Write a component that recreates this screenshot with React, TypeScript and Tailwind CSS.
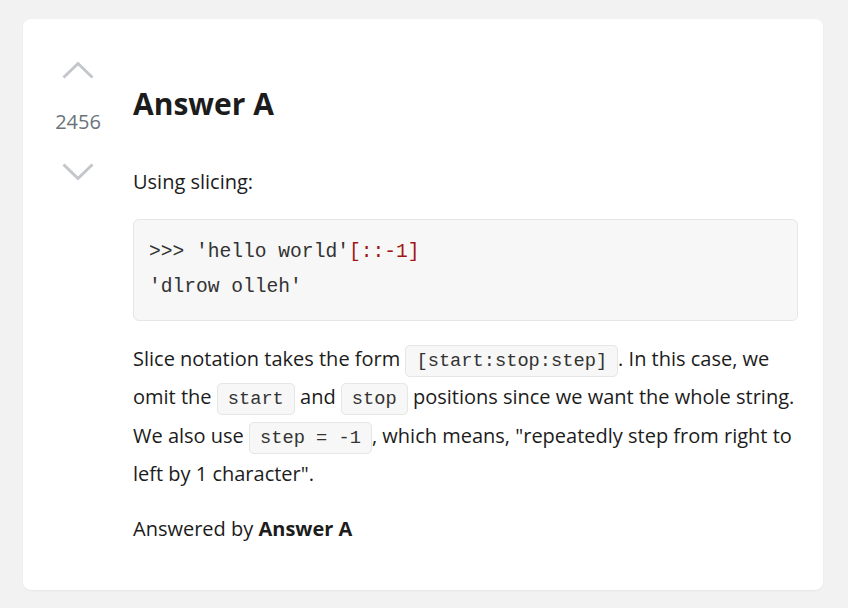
import React from 'react';

const sans = { fontFamily: '"Open Sans", "Noto Sans", sans-serif' };

function Chevron({ down }: { down?: boolean }) {
  return (
    <svg width="32" height="20" viewBox="0 0 32 20" fill="none" className="block">
      <path
        d={down ? 'M1.5 2.5 L16 16.5 L30.5 2.5' : 'M1.5 18.5 L16 4.5 L30.5 18.5'}
        stroke="#c3c7cb"
        strokeWidth="3"
      />
    </svg>
  );
}

function Code({ children }: { children: React.ReactNode }) {
  return (
    <code className="font-['Courier_New','Nimbus_Mono_PS','Liberation_Mono',monospace] text-[18.7px] leading-none text-[#333] bg-[#f6f7f6] border border-[#e5e7e5] rounded-[5px] px-[10px] py-[4px]">
      {children}
    </code>
  );
}

export default function App() {
  return (
    <div className="min-h-[608px] bg-[#f2f2f2] pl-[23px] pr-[25px] pt-[19px] pb-[19px]" style={sans}>
      <div className="bg-white rounded-[8px] shadow-[0_1px_2px_rgba(0,0,0,0.05)] flex pl-[33px] pr-[25px] pt-[40px] pb-[42px]">
        {/* votes */}
        <div className="w-[44px] flex flex-col items-center shrink-0">
          <Chevron />
          <div className="mt-[33px] text-[20px] text-[#6a737c] leading-[20px]">2456</div>
          <div className="mt-[30px]">
            <Chevron down />
          </div>
        </div>

        {/* body */}
        <div className="ml-[33px] flex-1 min-w-0 text-[#1c1c1c]">
          <h1 className="text-[30px] font-bold leading-[37.5px] mt-[26px]">Answer A</h1>
          <p className="text-[20px] leading-[38.3px] mt-[40.6px]">Using slicing:</p>
          <pre className="mt-[17.6px] bg-[#f6f7f6] border border-[#e5e7e5] rounded-[6px] px-[15px] py-[15px] font-['Courier_New','Nimbus_Mono_PS','Liberation_Mono',monospace] text-[19.6px] leading-[35px] text-[#333]">
            {'>>> '}&apos;hello world&apos;<span className="text-[#a31515]">[::-1]</span>
            {'\n'}&apos;dlrow olleh&apos;
          </pre>
          <p className="text-[20px] leading-[38.3px] mt-[19px]">
            Slice notation takes the form <Code>[start:stop:step]</Code>. In this case, we omit the{' '}
            <Code>start</Code> and <Code>stop</Code> positions since we want the whole string. We also use{' '}
            <Code>step = -1</Code>, which means, "repeatedly step from right to left by 1 character".
          </p>
          <p className="text-[20px] leading-[38.3px] mt-[17px]">
            Answered by <span className="font-bold">Answer A</span>
          </p>
        </div>
      </div>
    </div>
  );
}
